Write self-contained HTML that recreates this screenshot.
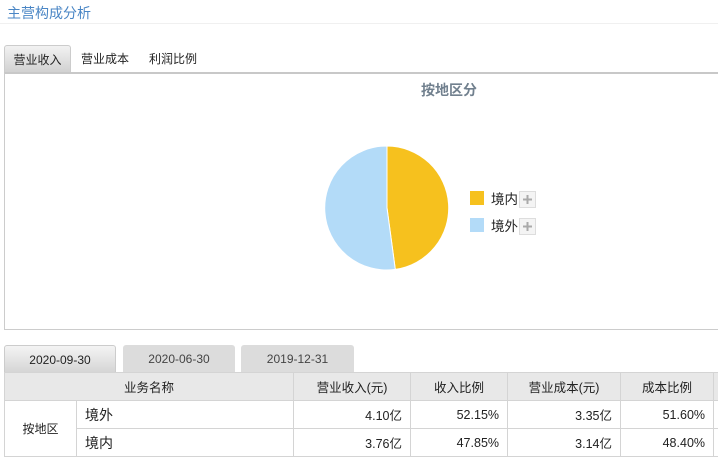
<!DOCTYPE html><html><head><meta charset="utf-8"><style>
*{margin:0;padding:0;box-sizing:border-box}
body{width:718px;height:457px;background:#fff;font-family:"Liberation Sans","Noto Sans CJK SC",sans-serif;font-size:12px;color:#222;position:relative;overflow:hidden}
.a{position:absolute}
.title{left:7px;top:3px;font-size:14px;color:#4a86c5}
.sep{left:0;top:23px;width:718px;height:1px;background:#f0f0f0}
.tab{top:45px;height:28px;line-height:28px;font-size:12px;text-align:center}
.t1{left:4px;width:67px;background:linear-gradient(#f2f2f2,#d0d0d0);border:1px solid #ccc;border-bottom:none;border-radius:3px 3px 0 0}
.box{left:4px;top:72px;width:720px;height:258px;border:1px solid #ccc;border-top:2px solid #c8c8c8}
.dt{top:345px;height:28px;line-height:28px;text-align:center;background:#dcdcdc;border-radius:3px 3px 0 0;color:#444}
table{position:absolute;left:4px;top:372px;border-collapse:collapse;width:760px;table-layout:fixed}
td{border:1px solid #d4d4d4;height:28px;padding:0 8px;font-size:12.5px;white-space:nowrap}
tr.h td{background:#e8e8e8;text-align:center;height:28px}
.r{text-align:right}
</style></head><body>
<div class="a title">主营构成分析</div>
<div class="a sep"></div>
<div class="a tab t1">营业收入</div>
<div class="a tab" style="left:72px;width:66px">营业成本</div>
<div class="a tab" style="left:140px;width:66px">利润比例</div>
<div class="a box"></div>
<div class="a" style="left:421px;top:80px;font-size:14px;font-weight:bold;color:#71808e">按地区分</div>
<svg class="a" style="left:0;top:0" width="718" height="340">
<path d="M387,208 L387,146 A62,62 0 0 1 395.3,269.4 Z" fill="#f6c11e" stroke="#fff" stroke-width="1"/>
<path d="M387,208 L395.3,269.4 A62,62 0 1 1 387,146 Z" fill="#b3dbf8" stroke="#fff" stroke-width="1"/>
<rect x="470" y="191" width="14" height="14" fill="#f6c11e"/>
<rect x="470" y="218" width="14" height="14" fill="#b3dbf8"/>
<text x="491" y="204" font-size="13.5" fill="#222" font-family="Liberation Sans,Noto Sans CJK SC,sans-serif">境内</text>
<text x="491" y="231" font-size="13.5" fill="#222" font-family="Liberation Sans,Noto Sans CJK SC,sans-serif">境外</text>
<rect x="519.5" y="191.5" width="16" height="16" fill="#f4f4f4" stroke="#ddd"/>
<rect x="519.5" y="218.5" width="16" height="16" fill="#f4f4f4" stroke="#ddd"/>
<path d="M523,199.5h9M527.5,195v9M523,226.5h9M527.5,222v9" stroke="#aaa" stroke-width="2"/>
</svg>
<div class="a dt" style="left:4px;width:112px;background:linear-gradient(#f4f4f4,#d4d4d4);border:1px solid #ccc;border-bottom:none;color:#222">2020-09-30</div>
<div class="a dt" style="left:123px;width:112px">2020-06-30</div>
<div class="a dt" style="left:241px;width:113px">2019-12-31</div>
<table>
<colgroup><col style="width:72px"><col style="width:217px"><col style="width:117px"><col style="width:97px"><col style="width:113px"><col style="width:93px"><col style="width:51px"></colgroup>
<tr class="h"><td colspan="2">业务名称</td><td>营业收入(元)</td><td>收入比例</td><td>营业成本(元)</td><td>成本比例</td><td></td></tr>
<tr><td rowspan="2" style="text-align:center;font-size:12px">按地区</td><td style="font-size:14px">境外</td><td class="r">4.10亿</td><td class="r">52.15%</td><td class="r">3.35亿</td><td class="r">51.60%</td><td></td></tr>
<tr><td style="font-size:14px">境内</td><td class="r">3.76亿</td><td class="r">47.85%</td><td class="r">3.14亿</td><td class="r">48.40%</td><td></td></tr>
</table>
</body></html>
